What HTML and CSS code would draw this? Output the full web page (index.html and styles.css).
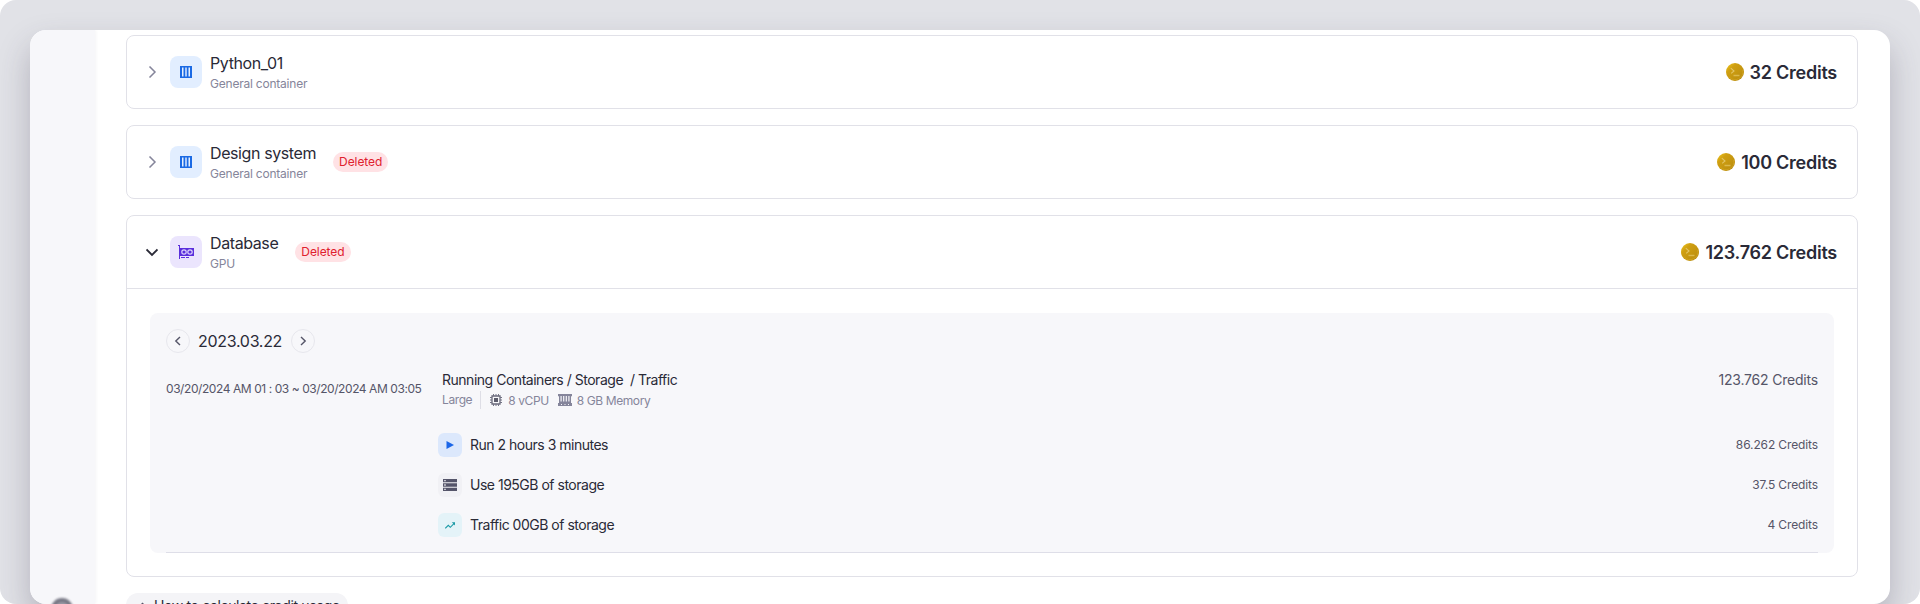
FILE: index.html
```
<!DOCTYPE html>
<html lang="en">
<head>
<meta charset="utf-8">
<title>Credit usage</title>
<link rel="stylesheet" href="styles.css">
</head>
<body>
<svg class="defs" width="0" height="0">
  <defs>
    <linearGradient id="gold" x1="0" y1="0" x2="1" y2="1">
      <stop offset="0" stop-color="#f5cc1c"/><stop offset=".3" stop-color="#cf9f12"/><stop offset=".75" stop-color="#c0920f"/><stop offset="1" stop-color="#a87c10"/>
    </linearGradient>
    <symbol id="coin" viewBox="0 0 18 18">
      <circle cx="9" cy="9" r="9" fill="url(#gold)"/>
      <path d="M3.200 14A7.800 7.800 0 0 0 16.600 7" fill="none" stroke="#d2a526" stroke-width=".8"/>
      <path d="M4.800 5.200 8 8 5.200 10.300" fill="none" stroke="#e2c465" stroke-width="1.100"/>
      <path d="M7.500 12.500h6" stroke="#dcb94c" stroke-width="1.400"/>
    </symbol>
    <symbol id="container" viewBox="0 0 12 12">
      <path fill="#1b6ae4" d="M0 0h12v12H0z"/>
      <path fill="#e6f0ff" d="M2 1.500h1.500v9H2zM8.500 1.500H10v9H8.500z"/>
      <path fill="#a9c9fb" d="M5 1.500h2v9H5z"/>
    </symbol>
  </defs>
</svg>
<div class="stage">
  <div class="window">
    <aside class="sidebar"><span class="avatar"></span></aside>
    <main class="content">
      <section class="card">
        <header class="card-head">
          <svg class="chevron" viewBox="0 0 12 12"><path d="m3.500 .5 5.500 5.500-5.500 5.500"/></svg>
          <span class="tile blue"><svg width="12" height="12"><use href="#container"/></svg></span>
          <div class="names"><div class="name">Python_01</div><div class="kind">General container</div></div>
          <div class="amount"><svg width="18" height="18"><use href="#coin"/></svg><span>32 Credits</span></div>
        </header>
      </section>
      <section class="card">
        <header class="card-head">
          <svg class="chevron" viewBox="0 0 12 12"><path d="m3.500 .5 5.500 5.500-5.500 5.500"/></svg>
          <span class="tile blue"><svg width="12" height="12"><use href="#container"/></svg></span>
          <div class="names"><div class="name">Design system</div><div class="kind">General container</div></div>
          <span class="badge">Deleted</span>
          <div class="amount"><svg width="18" height="18"><use href="#coin"/></svg><span>100 Credits</span></div>
        </header>
      </section>
      <section class="card">
        <header class="card-head open">
          <svg class="chevron" viewBox="0 0 12 12"><path d="m.5 3.500 5.500 5.500 5.500-5.500"/></svg>
          <span class="tile violet">
            <svg width="16" height="14" viewBox="0 0 16 14">
              <path fill="#5b2fdc" d="M0 0h2v14H1V1H0z"/>
              <path fill="#5b2fdc" d="M2 3h14v8H2zM3 12h4v1H3zM8 12h3v1H8z"/>
              <g fill="none" stroke="#ddd3fb" stroke-width="1.200"><circle cx="6" cy="7" r="2.200"/><circle cx="12" cy="7" r="2.200"/></g>
            </svg>
          </span>
          <div class="names"><div class="name">Database</div><div class="kind">GPU</div></div>
          <span class="badge">Deleted</span>
          <div class="amount"><svg width="18" height="18"><use href="#coin"/></svg><span>123.762 Credits</span></div>
        </header>
        <div class="card-body">
          <div class="panel">
            <div class="pager">
              <button class="round"><svg viewBox="0 0 10 10"><path d="M7 .9 2.800 5 7 9.100"/></svg></button>
              <span class="day">2023.03.22</span>
              <button class="round"><svg viewBox="0 0 10 10"><path d="M3 .9 7.200 5 3 9.100"/></svg></button>
            </div>
            <div class="usage">
              <div class="period">03/20/2024 AM 01 : 03 ~ 03/20/2024 AM 03:05</div>
              <div class="summary">
                <div class="summary-title">Running Containers / Storage&nbsp; / Traffic</div>
                <div class="specs">
                  <span class="size">Large</span>
                  <svg width="12" height="12" viewBox="0 0 12 12">
                    <path fill="none" stroke="#686879" stroke-width="1.300" d="M2 2h8v8H2z"/>
                    <path fill="#5b5b6b" d="M4 4h4v4H4z"/>
                    <path stroke="#737384" d="M3.500 0v2M6 0v2M8.500 0v2M3.500 10v2M6 10v2M8.500 10v2M0 3.500h2M0 6h2M0 8.500h2M10 3.500h2M10 6h2M10 8.500h2"/>
                  </svg>
                  <span class="cpu">8 vCPU</span>
                  <svg width="14" height="12" viewBox="0 0 14 12">
                    <path fill="#85859b" fill-rule="evenodd" d="M0 0h14v2.200h-1V9h1v3H0V9h1V2.200H0zM2.500 2v5.500h1.200V2zM5.100 2v5.500h1.200V2zM7.700 2v5.500h1.200V2zM10.300 2v5.500h1.200V2zM3 10v1h1v-1zM6.500 10v1h1v-1zM10 10v1h1v-1z"/>
                  </svg>
                  <span class="memory">8 GB Memory</span>
                </div>
              </div>
              <div class="subtotal">123.762 Credits</div>
            </div>
            <ul class="lines">
              <li><span class="mini run"><svg width="8" height="8" viewBox="0 0 8 8"><path fill="#1b66e8" d="M.5 0 8 4 .5 8z"/></svg></span><span class="what">Run 2 hours 3 minutes</span><span class="cost">86.262 Credits</span></li>
              <li><span class="mini disk"><svg width="14" height="12" viewBox="0 0 14 12"><path fill="#55556a" d="M0 0h14v3.300H0zM0 4.350h14v3.300H0zM0 8.700h14V12H0z"/><path fill="#f1f1f5" d="M1.300 1h1.400v1.300H1.300zM1.300 5.350h1.400v1.300H1.300zM1.300 9.700h1.400V11H1.300z"/></svg></span><span class="what">Use 195GB of storage</span><span class="cost">37.5 Credits</span></li>
              <li><span class="mini net"><svg width="10" height="7" viewBox="0 0 10 7"><path fill="none" stroke="#1b9aa6" stroke-width="1.050" d="M.3 6.300 3.300 3.300 5.300 5.300 9.200 1.300"/><path fill="#1b9aa6" d="M6.800.3H10v3.200z"/></svg></span><span class="what">Traffic 00GB of storage</span><span class="cost">4 Credits</span></li>
            </ul>
          </div>
        </div>
      </section>
      <button class="howto"><svg width="9" height="6" viewBox="0 0 9 6"><path fill="none" stroke="#555568" stroke-width="1.400" d="m1 5 3.500-3.500L8 5"/></svg><span>How to calculate credit usage</span></button>
    </main>
  </div>
</div>
</body>
</html>
```
FILE: styles.css
```
* { box-sizing: border-box; }
body { margin: 0; background: #fff; font-family: Inter, "Liberation Sans", sans-serif; color: #2a2a37; overflow: hidden; }
button { font: inherit; color: inherit; border: 0; padding: 0; background: none; }
svg { display: block; flex: none; }
.defs { position: absolute; }
.stage { height: 604px; padding: 30px 30px 0; background: #e1e2e7; border-radius: 16px; overflow: hidden; }
.window { display: flex; height: 574px; background: #fff; border-radius: 16px; overflow: hidden; box-shadow: 0 16px 32px rgba(60, 55, 75, .28); }
.sidebar { display: flex; width: 65px; flex: none; padding: 568px 0 0 21px; background: #f7f7fa; box-shadow: 0 0 4px rgba(40, 40, 70, .08); }
.avatar { width: 22px; height: 22px; flex: none; border-radius: 50%; background: #9a9aa6; border: 4px solid #777784; filter: blur(1px); }
.content { flex: 1; min-width: 0; padding: 5px 32px 0 31px; display: flex; flex-direction: column; align-items: stretch; gap: 16px; }
.card { flex: none; border: 1px solid #e1e1e8; border-radius: 8px; }
.card-head { display: flex; align-items: center; height: 72px; padding: 0 20px 0 19px; }
.open { height: 73px; border-bottom: 1px solid #e1e1e8; }
.chevron { width: 12px; height: 12px; margin-right: 12px; fill: none; stroke: #85859a; stroke-width: 1.500; }
.open .chevron { stroke: #2a2a37; stroke-width: 1.800; }
.tile { display: grid; place-items: center; width: 32px; height: 32px; border-radius: 8px; margin-right: 8px; }
.blue { background: #e2eeff; }
.violet { background: #ebe5fd; }
.name { font-size: 16px; line-height: 22px; padding-bottom: 2px; letter-spacing: -.4px; }
.kind { font-size: 12px; line-height: 16px; letter-spacing: -.22px; color: #85859a; }
.badge { margin-left: 17px; height: 20px; padding: 0 6px; border-radius: 10px; background: #ffe2e5; color: #e0202e; font-size: 12px; line-height: 20px; letter-spacing: -.08px; }
.amount { margin-left: auto; display: flex; align-items: center; gap: 6px; font-size: 18px; font-weight: 600; line-height: 24px; letter-spacing: -.25px; }
.amount span { padding-top: 1px; }
.card-body { padding: 24px 23px 23px; }
.panel { position: relative; height: 240px; padding: 16px; border-radius: 8px; background: #f7f7fa; }
.panel::after { content: ""; position: absolute; left: 16px; right: 16px; bottom: 0; height: 1px; background: #dedee8; }
.pager { display: flex; align-items: center; height: 24px; gap: 8px; }
.round { display: grid; place-items: center; width: 24px; height: 24px; border: 1px solid #e7e7ed; border-radius: 50%; }
.round svg { width: 10px; height: 10px; fill: none; stroke: #555568; stroke-width: 1.400; }
.day { width: 85px; font-size: 16px; line-height: 24px; letter-spacing: -.3px; }
.usage { display: flex; align-items: center; height: 40px; margin-top: 16px; color: #555568; }
.period { width: 276px; font-size: 12px; padding-bottom: 2px; letter-spacing: -.43px; white-space: nowrap; }
.summary-title { font-size: 14px; line-height: 22px; letter-spacing: -.48px; color: #2a2a37; }
.specs { display: flex; align-items: center; height: 18px; font-size: 12px; letter-spacing: -.4px; color: #85859a; }
.size { padding-right: 8px; margin-right: 9px; line-height: 18px; border-right: 1px solid #dedee6; }
.cpu { margin: 0 9px 0 6px; }
.memory { margin-left: 5px; }
.subtotal { align-self: flex-start; margin-left: auto; font-size: 14px; line-height: 22px; letter-spacing: -.2px; }
.lines { list-style: none; margin: 24px 0 0 272px; padding: 0; display: grid; gap: 16px; }
.lines li { display: flex; align-items: center; height: 24px; font-size: 14px; }
.what { padding-bottom: 1px; letter-spacing: -.49px; }
.mini { display: grid; place-items: center; width: 24px; height: 24px; margin-right: 8px; border-radius: 6px; }
.run { background: #dce8fc; }
.disk { background: #f1f1f5; }
.net { background: #e4f3f8; }
.cost { margin-left: auto; padding-bottom: 1px; font-size: 12px; letter-spacing: -.12px; color: #555568; }
.howto { display: flex; align-self: flex-start; align-items: center; flex: none; width: 222px; height: 24px; padding-left: 12px; gap: 7px; border-radius: 12px; background: #f4f4f7; font-size: 14px; letter-spacing: -.36px; white-space: nowrap; }
```
